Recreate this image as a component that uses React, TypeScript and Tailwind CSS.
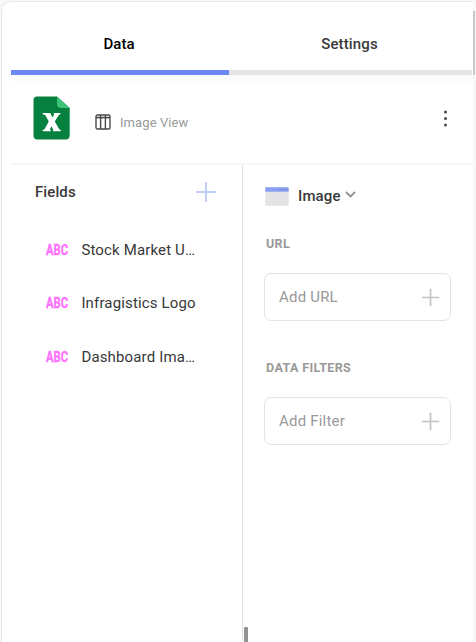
function PlusIcon({ size, className }: { size: number; className: string }) {
  return (
    <svg width={size} height={size} viewBox="0 0 22 22" fill="none" stroke="currentColor" strokeWidth="2" className={className}>
      <path d="M11 1v20M1 11h20" />
    </svg>
  );
}

function ExcelIcon() {
  return (
    <svg width="37" height="44" viewBox="0 0 37 44" className="shrink-0">
      <path d="M4 .5H24L36.7 12V39.5a4 4 0 0 1-4 4H4.5a4 4 0 0 1-4-4V4A3.5 3.5 0 0 1 4 .5Z" fill="#05803e" />
      <path d="M24 .5L36.7 12H28a4 4 0 0 1-4-4Z" fill="#3cc378" />
      <path
        d="M9.6 17h7.6l2.4 4.6 1.6-3.4-.8-1.2h7v1.2l-1.6.8-4 6.6 4.4 7.6 1.6.8v1.2H20l.3-1.2-1.8-3.8-1.7 3.2 1 .6v1.2h-8.2v-1.2l1.9-.8 4.3-7.6-3.6-6.6-2.6-.8Z"
        fill="#fff"
      />
    </svg>
  );
}

function TableIcon() {
  return (
    <svg width="16" height="16" viewBox="0 0 16 16" fill="none" stroke="#4a4a4a" strokeWidth="1.4" className="shrink-0">
      <rect x="1" y="1" width="14" height="14" rx="1.5" />
      <path d="M1 3.6h14" strokeWidth="1.6" />
      <path d="M5.6 1v14M10.4 1v14" />
    </svg>
  );
}

function WindowIcon() {
  return (
    <svg width="24" height="19" viewBox="0 0 24 19" className="shrink-0">
      <rect x=".3" y=".3" width="23.4" height="18.4" rx="1" fill="#e4e4e6" />
      <path d="M.3 1.3a1 1 0 0 1 1-1h21.4a1 1 0 0 1 1 1v3.4H.3Z" fill="#8b9ff2" />
      <path d="M14 2.5h2m1 0h2m1 0h1.5" stroke="#7680ad" strokeWidth="1" />
    </svg>
  );
}

function FieldRow({ name }: { name: string }) {
  return (
    <li className="flex h-[53.5px] items-center pl-[35px]">
      <span className="w-[35.4px] shrink-0">
        <svg width="22" height="16" viewBox="0 0 22 16" className="overflow-visible">
          <text x="0" y="13.2" textLength="22" lengthAdjust="spacingAndGlyphs" className="fill-[#ff70ff] stroke-[#ff70ff] stroke-[0.4] font-[Roboto] text-[15.5px] font-bold">
            ABC
          </text>
        </svg>
      </span>
      <span className="whitespace-nowrap text-[15px] tracking-[0.15px]">{name}</span>
    </li>
  );
}

function DropZone({ title, label }: { title: string; label: string }) {
  return (
    <section className="h-[124px]">
      <h3 className="pl-[2px] text-[12.5px] leading-[16px] font-bold tracking-[0.38px] text-[#999]">{title}</h3>
      <button className="mt-[21px] flex h-[48px] w-[187px] items-center justify-between rounded-[7px] border border-[#e4e4e4] pr-[10px] pl-[14px] text-[15px] tracking-[0.2px] text-[#999]">
        {label}
        <PlusIcon size={19} className="text-[#c4c4c4]" />
      </button>
    </section>
  );
}

export default function App() {
  return (
    <div className="flex h-[642px] w-[476px] overflow-hidden bg-[#f7f7f8] pt-px pl-px font-[Roboto,sans-serif] text-[#383838]">
      <main className="flex w-[472px] shrink-0 flex-col rounded-tl-[10px] border-t border-l border-[#e9e9e9] bg-white pl-[9px]">
        <nav className="flex h-[73px] w-[461px] shrink-0 text-[15px] font-medium">
          <button className="flex w-[218px] items-center justify-center border-b-[5px] border-[#6e87f7] pt-[16px] pr-[2px] text-black">
            Data
          </button>
          <button className="flex w-[243px] items-center justify-center border-b-[5px] border-[#e4e4e4] pt-[16px] pr-[2px] tracking-[0.12px]">Settings</button>
        </nav>
        <header className="flex h-[90px] shrink-0 items-start border-b-2 border-[#f6f6f7] bg-linear-to-b from-[#fafafa] from-0% to-white to-12% pt-[21px] pl-[22px]">
          <ExcelIcon />
          <div className="mt-[18px] ml-[25px] flex items-start gap-[9px] text-[13px] leading-[18px] tracking-[0.08px] text-[#999]">
            <TableIcon />
            <span>Image View</span>
          </div>
          <svg width="6" height="18" viewBox="0 0 6 18" fill="#4a4a4a" className="mt-[13px] mr-[25px] ml-auto">
            <circle cx="3.5" cy="3.1" r="1.5" />
            <circle cx="3.5" cy="9.5" r="1.5" />
            <circle cx="3.5" cy="15.9" r="1.5" />
          </svg>
        </header>
        <div className="flex min-h-0 flex-1">
          <aside className="w-[232px] shrink-0 border-r border-[#e2e2e2]">
            <div className="flex h-[54px] items-center justify-between pr-[25px] pl-[24px] text-[15px] font-medium">
              <span className="tracking-[0.1px]">Fields</span>
              <PlusIcon size={22} className="text-[#c2cefa]" />
            </div>
            <ul className="mt-[4px]">
              <FieldRow name="Stock Market U…" />
              <FieldRow name="Infragistics Logo" />
              <FieldRow name="Dashboard Ima…" />
            </ul>
          </aside>
          <div className="ml-px h-[15px] w-[4px] self-end rounded-t-[1px] bg-[#929394]" />
          <section className="flex-1 pt-[20px] pl-[16px]">
            <div className="flex h-[22px] items-center pl-px text-[15px] font-medium">
              <WindowIcon />
              <span className="mt-[1px] ml-[9px] tracking-[0.15px]">Image</span>
              <svg width="11" height="7" viewBox="0 0 11 7" fill="none" stroke="#929292" strokeWidth="1.8" className="mb-[3px] ml-[4px]">
                <path d="M1 1l4.5 4.5L10 1" />
              </svg>
            </div>
            <div className="mt-[29px]">
              <DropZone title="URL" label="Add URL" />
              <DropZone title="DATA FILTERS" label="Add Filter" />
            </div>
          </section>
        </div>
      </main>
      <div className="mt-[10px] h-[64px] w-[2px] shrink-0 bg-[#c9c9c9]" />
    </div>
  );
}
